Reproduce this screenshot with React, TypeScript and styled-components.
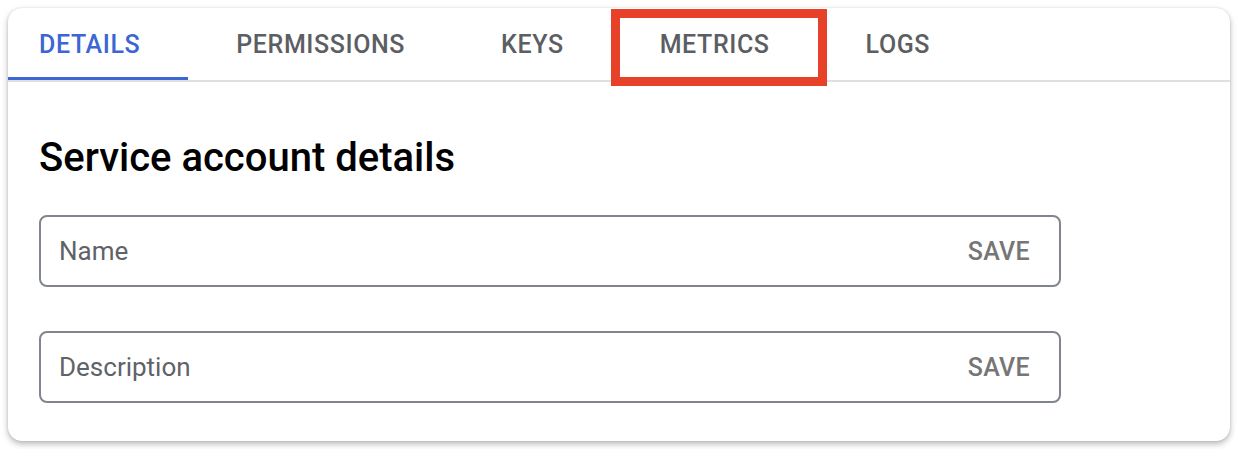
import React from 'react'
import styled, { createGlobalStyle } from 'styled-components'

const GlobalStyle = createGlobalStyle`
  html, body {
    margin: 0;
    padding: 0;
    background: #ffffff;
    font-family: Roboto, 'Liberation Sans', Arial, sans-serif;
  }
`

const Page = styled.div`
  padding: 8px;
  width: 1238px;
  box-sizing: border-box;
`

const Card = styled.div`
  width: 1222px;
  background: #fff;
  border-radius: 14px;
  box-shadow: 0 3px 6px rgba(0, 0, 0, 0.28), 0 0 2px rgba(0, 0, 0, 0.14);
  overflow: hidden;
`

const TabBar = styled.div`
  display: flex;
  height: 72px;
  border-bottom: 2px solid #e0e0e0;
`

const Tab = styled.div<{ $active?: boolean; $first?: boolean; $highlight?: boolean }>`
  position: relative;
  display: flex;
  align-items: center;
  box-sizing: border-box;
  height: 72px;
  padding: 3px 48px 0 ${p => (p.$first ? '31px' : '48px')};
  font-size: 25px;
  font-weight: 500;
  letter-spacing: 0.6px;
  color: ${p => (p.$active ? '#3b66d4' : '#5b5e62')};
  border-bottom: 3px solid ${p => (p.$active ? '#3b66d4' : 'transparent')};
  margin-bottom: -1px;

  ${p =>
    p.$highlight &&
    `
    &::after {
      content: '';
      position: absolute;
      left: -1px;
      top: 1px;
      width: 216px;
      height: 77px;
      box-sizing: border-box;
      border: 9px solid #e8412a;
    }
  `}
`

const Content = styled.div`
  padding: 52px 31px 38px;
`

const Heading = styled.h2`
  margin: 0 0 33px;
  font-size: 40px;
  line-height: 48px;
  font-weight: 500;
  color: #000;
`

const Field = styled.div<{ $spaced?: boolean }>`
  display: flex;
  align-items: center;
  justify-content: space-between;
  box-sizing: border-box;
  width: 1022px;
  height: 72px;
  margin-top: ${p => (p.$spaced ? '44px' : '0')};
  padding: 0 29px 0 18px;
  border: 2px solid #80868b;
  border-radius: 8px;
`

const Label = styled.span`
  font-size: 26px;
  color: #5f6368;
`

const SaveButton = styled.span`
  font-size: 25px;
  font-weight: 500;
  letter-spacing: 0.3px;
  color: #767676;
`

const tabs = ['DETAILS', 'PERMISSIONS', 'KEYS', 'METRICS', 'LOGS']

export default function App() {
  return (
    <Page>
      <GlobalStyle />
      <Card>
        <TabBar>
          {tabs.map((t, i) => (
            <Tab key={t} $active={i === 0} $first={i === 0} $highlight={t === 'METRICS'}>
              {t}
            </Tab>
          ))}
        </TabBar>
        <Content>
          <Heading>Service account details</Heading>
          <Field>
            <Label>Name</Label>
            <SaveButton>SAVE</SaveButton>
          </Field>
          <Field $spaced>
            <Label>Description</Label>
            <SaveButton>SAVE</SaveButton>
          </Field>
        </Content>
      </Card>
    </Page>
  )
}
